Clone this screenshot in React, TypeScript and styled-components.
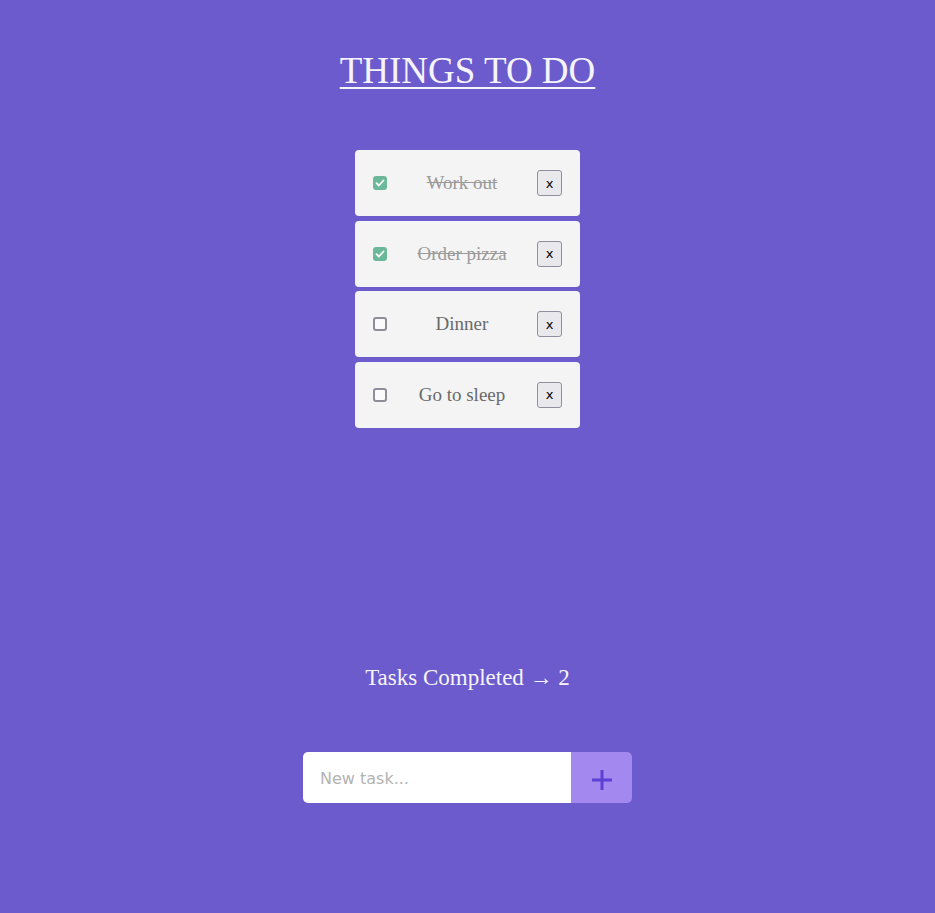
import React, { useState } from "react";
import styled, { createGlobalStyle } from "styled-components";

const Global = createGlobalStyle`
  html, body { margin: 0; padding: 0; }
  body {
    background: #6c5bcd;
    font-family: "Liberation Serif", serif;
    min-height: 913px;
  }
`;

const Page = styled.main`
  display: flex;
  flex-direction: column;
  align-items: center;
  padding-top: 48px;
`;

const Title = styled.h1`
  margin: 0;
  font-family: "Liberation Serif", serif;
  font-weight: 400;
  font-size: 37px;
  line-height: 46px;
  color: #f6f4fb;
  text-decoration: underline;
  text-decoration-thickness: 2px;
  text-underline-offset: 4px;
`;

const List = styled.ul`
  list-style: none;
  margin: 56px 0 0;
  padding: 0;
  width: 225px;
  display: flex;
  flex-direction: column;
  gap: 4.67px;
`;

const Card = styled.li`
  height: 66px;
  background: #f4f4f4;
  border-radius: 4px;
  display: flex;
  align-items: center;
  padding: 0 18px;
  box-sizing: border-box;
`;

const CheckWrap = styled.label`
  position: relative;
  flex: none;
  display: flex;
  cursor: pointer;
`;

const HiddenInput = styled.input`
  position: absolute;
  opacity: 0;
  margin: 0;
  width: 0;
  height: 0;
`;

const Box = styled.span<{ $on: boolean }>`
  width: 14px;
  height: 14px;
  box-sizing: border-box;
  border-radius: 3px;
  border: 2px solid ${(p) => (p.$on ? "#6cb89a" : "#8e8e9a")};
  background: ${(p) => (p.$on ? "#6cb89a" : "#fbfbfb")};
  display: flex;
  align-items: center;
  justify-content: center;
`;

const Label = styled.span<{ $done: boolean }>`
  flex: 1;
  text-align: center;
  font-family: "Liberation Serif", serif;
  font-size: 19px;
  color: ${(p) => (p.$done ? "#9a9a9a" : "#6a6a6a")};
  text-decoration: ${(p) => (p.$done ? "line-through" : "none")};
`;

const Remove = styled.button`
  flex: none;
  width: 25px;
  height: 26px;
  padding: 0;
  border: 1px solid #8f8f9d;
  border-radius: 3px;
  background: #e9e9ed;
  color: #000;
  font-family: "DejaVu Sans", sans-serif;
  font-size: 13px;
`;

const Counter = styled.p`
  margin: 238px 0 0;
  font-family: "Liberation Serif", serif;
  font-size: 23px;
  line-height: 24px;
  color: #f6f4fb;
`;

const Form = styled.form`
  margin-top: 62px;
  display: flex;
`;

const Input = styled.input`
  width: 268px;
  height: 51px;
  box-sizing: border-box;
  border: none;
  outline: none;
  border-radius: 5px 0 0 5px;
  background: #fff;
  padding: 2px 17px 0;
  font-family: "DejaVu Sans", sans-serif;
  font-size: 16px;
  color: #333;
  &::placeholder { color: #b3b3b3; }
`;

const Add = styled.button`
  width: 61px;
  height: 51px;
  border: none;
  border-radius: 0 5px 5px 0;
  background: #a389ef;
  color: #5d3fd3;
  display: flex;
  align-items: center;
  justify-content: center;
  padding: 6px 0 0;
  box-sizing: border-box;
`;

const initial = [
  { id: 1, text: "Work out", done: true },
  { id: 2, text: "Order pizza", done: true },
  { id: 3, text: "Dinner", done: false },
  { id: 4, text: "Go to sleep", done: false },
];

function CheckBox({ checked, onChange }: { checked: boolean; onChange: () => void }) {
  return (
    <CheckWrap>
      <HiddenInput type="checkbox" checked={checked} onChange={onChange} />
      <Box $on={checked}>
        {checked && (
          <svg width="10" height="10" viewBox="0 0 10 10">
            <path d="M1.5 5.2l2.3 2.3L8.5 2.5" fill="none" stroke="#fff" strokeWidth="1.8" strokeLinecap="round" strokeLinejoin="round" />
          </svg>
        )}
      </Box>
    </CheckWrap>
  );
}

export default function App() {
  const [tasks, setTasks] = useState(initial);
  const completed = tasks.filter((t) => t.done).length;
  return (
    <>
      <Global />
      <Page>
        <Title>THINGS TO DO</Title>
        <List>
          {tasks.map((t) => (
            <Card key={t.id}>
              <CheckBox
                checked={t.done}
                onChange={() =>
                  setTasks(tasks.map((x) => (x.id === t.id ? { ...x, done: !x.done } : x)))
                }
              />
              <Label $done={t.done}>{t.text}</Label>
              <Remove type="button" onClick={() => setTasks(tasks.filter((x) => x.id !== t.id))}>
                x
              </Remove>
            </Card>
          ))}
        </List>
        <Counter>Tasks Completed → {completed}</Counter>
        <Form onSubmit={(e) => e.preventDefault()}>
          <Input placeholder="New task..." />
          <Add type="submit" aria-label="Add">
            <svg width="22" height="22" viewBox="0 0 22 22">
              <path d="M11 1v20M1 11h20" stroke="currentColor" strokeWidth="3" />
            </svg>
          </Add>
        </Form>
      </Page>
    </>
  );
}
